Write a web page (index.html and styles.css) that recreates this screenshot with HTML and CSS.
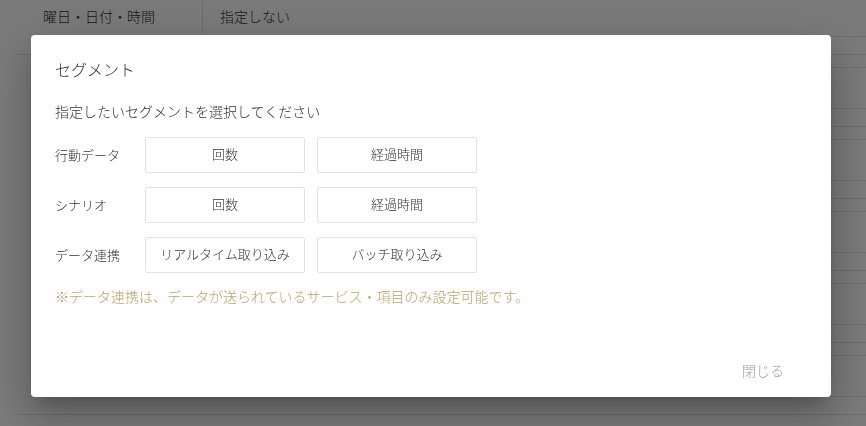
FILE: index.html
```html
<!DOCTYPE html>
<html lang="ja">
<head>
<meta charset="utf-8">
<link rel="stylesheet" href="styles.css">
</head>
<body>
<div class="page">
  <div class="main">
    <div class="row row-top">
      <div class="cell cell-head">曜日・日付・時間</div>
      <div class="cell cell-val">指定しない</div>
    </div>
    <div class="row row-body"></div>
  </div>
  <div class="side"></div>
</div>

<div class="overlay">
  <div class="dialog">
    <div class="dialog-title">セグメント</div>
    <div class="dialog-sub">指定したいセグメントを選択してください</div>
    <div class="seg-list">
      <div class="seg-row">
        <div class="seg-label">行動データ</div>
        <button class="seg-btn">回数</button>
        <button class="seg-btn">経過時間</button>
      </div>
      <div class="seg-row">
        <div class="seg-label">シナリオ</div>
        <button class="seg-btn">回数</button>
        <button class="seg-btn">経過時間</button>
      </div>
      <div class="seg-row">
        <div class="seg-label">データ連携</div>
        <button class="seg-btn">リアルタイム取り込み</button>
        <button class="seg-btn">バッチ取り込み</button>
      </div>
    </div>
    <div class="note">※データ連携は、データが送られているサービス・項目のみ設定可能です。</div>
    <div class="dialog-footer">
      <button class="close-btn">閉じる</button>
    </div>
  </div>
</div>
</body>
</html>
```

FILE: styles.css
```css
* { box-sizing: border-box; }
html, body {
  margin: 0;
  padding: 0;
  width: 866px;
  height: 426px;
  overflow: hidden;
  background: #ffffff;
  font-family: "Noto Sans CJK JP", "Noto Sans", sans-serif;
  font-weight: 300;
  color: #333333;
}

.page {
  display: flex;
  width: 866px;
  height: 426px;
  padding-left: 18px;
}
.main {
  flex: 1;
  display: flex;
  flex-direction: column;
}
.side {
  width: 36px;
  background-image: repeating-linear-gradient(
    to bottom,
    #e4e4e4 0px, #e4e4e4 1px,
    transparent 1px, transparent 18px,
    #e4e4e4 18px, #e4e4e4 19px,
    transparent 19px, transparent 31px,
    #e4e4e4 31px, #e4e4e4 32px,
    transparent 32px, transparent 72px
  );
  background-position: 0 36px;
  background-size: 100% 432px;
  background-repeat: no-repeat;
}
.row-top {
  display: flex;
  height: 55px;
  border-bottom: 1px solid #e4e4e4;
}
.cell {
  height: 36px;
  display: flex;
  align-items: center;
  font-size: 14px;
  color: #333;
  padding-bottom: 4px;
}
.cell-head {
  width: 185px;
  padding-left: 25px;
  border-right: 1px solid #e4e4e4;
}
.cell-val {
  padding-left: 17px;
}
.row-body {
  height: 360px;
  border-bottom: 1px solid #e4e4e4;
}

.overlay {
  position: fixed;
  inset: 0;
  background: rgba(0, 0, 0, 0.52);
  display: flex;
  align-items: flex-start;
  justify-content: flex-start;
  padding: 35px 0 0 31px;
}
.dialog {
  width: 800px;
  height: 362px;
  background: #ffffff;
  border-radius: 4px;
  box-shadow: 0 11px 15px -7px rgba(0,0,0,.2), 0 24px 38px 3px rgba(0,0,0,.14), 0 9px 46px 8px rgba(0,0,0,.12);
  padding: 23px 24px 17px 24px;
  display: flex;
  flex-direction: column;
}
.dialog-title {
  font-size: 16px;
  line-height: 22px;
  color: #333;
}
.dialog-sub {
  margin-top: 21px;
  font-size: 14px;
  line-height: 20px;
  color: #333;
}
.seg-list {
  margin-top: 16px;
  display: flex;
  flex-direction: column;
  gap: 14px;
}
.seg-row {
  display: flex;
  align-items: center;
  height: 36px;
}
.seg-label {
  width: 90px;
  font-size: 13px;
  color: #333;
  padding-bottom: 2px;
}
.seg-btn {
  width: 160px;
  height: 36px;
  margin-right: 12px;
  background: #ffffff;
  border: 1px solid #e3e3e3;
  border-radius: 2px;
  font-family: "Noto Sans CJK JP", "Noto Sans", sans-serif;
  font-weight: 300;
  font-size: 13px;
  color: #333;
  padding: 0 0 4px 0;
}
.note {
  margin-top: 13px;
  font-size: 14px;
  line-height: 20px;
  color: #bba26e;
}
.dialog-footer {
  margin-top: auto;
  display: flex;
  justify-content: flex-end;
  padding-right: 23px;
}
.close-btn {
  background: transparent;
  border: none;
  padding: 0;
  font-family: "Noto Sans CJK JP", "Noto Sans", sans-serif;
  font-weight: 300;
  font-size: 14px;
  line-height: 20px;
  color: #9e9e9e;
}
```
